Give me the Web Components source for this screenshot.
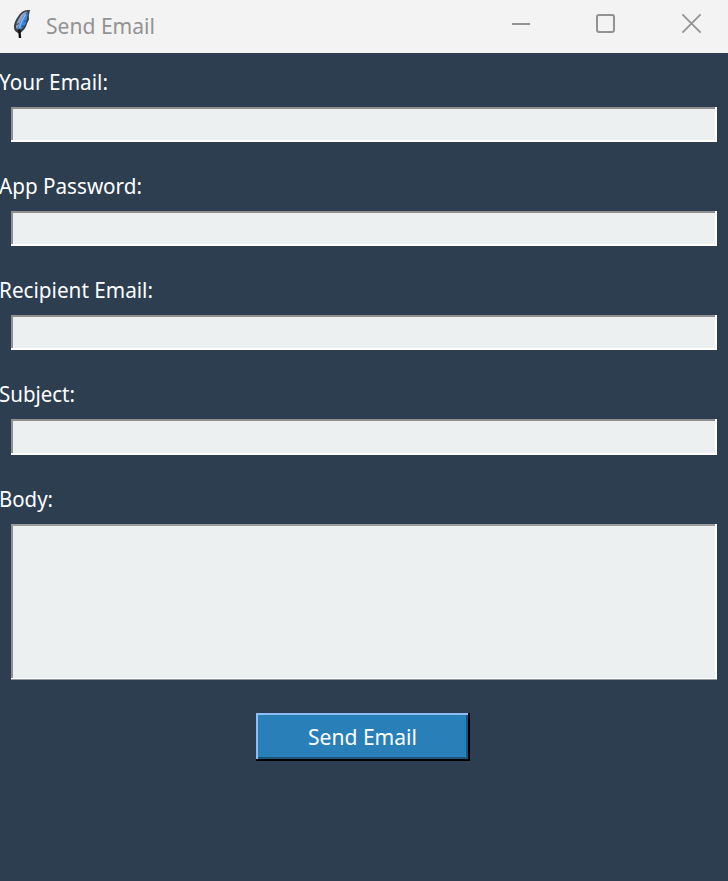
<!DOCTYPE html>
<html lang="en">
<head>
<meta charset="utf-8">
<title>Send Email</title>
<style>
html, body { margin: 0; height: 100%; overflow: hidden; background: #2c3e50; }
body { font-family: "Noto Sans", "Open Sans", sans-serif; }
</style>
</head>
<body>
<app-window>
  <title-bar slot="title">Send Email</title-bar>
  <form-field text-width="109">Your Email:</form-field>
  <form-field text-width="143">App Password:</form-field>
  <form-field text-width="154">Recipient Email:</form-field>
  <form-field text-width="76" box-height="36">Subject:</form-field>
  <form-field text-width="54" multiline box-height="156">Body:</form-field>
  <push-button>Send Email</push-button>
</app-window>
<script>
function define(name, html, setup) {
  const template = document.createElement('template');
  template.innerHTML = html;
  customElements.define(name, class extends HTMLElement {
    connectedCallback() {
      if (this.shadowRoot) return;
      this.attachShadow({ mode: 'open' }).append(template.content.cloneNode(true));
      if (setup) setup(this, this.shadowRoot);
    }
  });
}

/* Condenses a line of text horizontally to a given advance width. */
define('fit-text', `
<style>
:host { display: block; white-space: nowrap; }
span { display: inline-block; transform-origin: 0 50%; }
</style><span><slot></slot></span>`, (host, root) => {
  const span = root.querySelector('span');
  const target = Number(host.getAttribute('width'));
  host.style.width = target + 'px';
  const natural = span.getBoundingClientRect().width;
  if (natural) span.style.transform = 'scaleX(' + target / natural + ')';
});

define('feather-icon', `
<style>:host { display: block; width: 20px; height: 31px; } svg { display: block; }</style>
<svg width="20" height="31" viewBox="0 0 20 31">
  <path d="M18 1 C13.5 .6 10 2 7.6 5.2 C4.6 9 2.4 13 2 17 C1.9 20 2.6 22 4.8 23.2 L6.4 24.2 L9 23.4 C12 21.4 14.4 18 15 14.6 L17 10.5 L16.8 6.5 Z" fill="#3a3d42"/>
  <path d="M15.6 2.6 C12 3 9.4 5 7.4 8.4 C5.2 12 3.8 15.6 4 18.6 L5.2 20.6 L7.6 15.4 L11 8 Z" fill="#86a3c8"/>
  <path d="M16 3 L15.3 7.4 L14.6 11.6 C13.8 15.6 11.4 19 8 21 L5.6 20.2 L7.6 14 L11.4 7.4 Z" fill="#3f86dc"/>
  <path d="M13.6 5.4 C10.8 9.4 8.8 13.6 7.4 18.6" fill="none" stroke="#8dbcf0" stroke-width="1.3"/>
  <path d="M4.2 15.6 L6.8 14.6 M12.2 12.6 L14.6 11.4 M9.4 17.2 L12 17" stroke="#28466e" stroke-width="1"/>
  <path d="M7.3 20.4 L8 29" stroke="#111" stroke-width="2.4"/>
</svg>`);

define('window-controls', `
<style>
:host { display: flex; align-items: center; }
svg { display: block; fill: none; stroke: #929292; stroke-width: 2; }
</style>
<svg width="190" height="22" viewBox="0 0 190 22">
  <path d="M0 11H18"/>
  <rect x="85" y="2" width="17" height="17" rx="2"/>
  <path d="M170.4 1.4L188.6 19.6M188.6 1.4L170.4 19.6" stroke-width="1.7"/>
</svg>`);

define('title-bar', `
<style>
:host { display: flex; box-sizing: border-box; height: 53px; padding: 0 26px 0 12px; background: #f3f3f3; color: #929292; font-size: 22px; line-height: 30px; }
feather-icon { margin-top: 9px; }
fit-text { margin: 10px 0 0 14px; }
window-controls { margin: 13px 0 0 auto; height: 22px; }
svg { flex: none; }
</style>
<feather-icon></feather-icon><fit-text width="109"><slot></slot></fit-text><window-controls></window-controls>`);
 
define('form-field', `
<style>
:host { display: block; }
.label { box-sizing: border-box; height: 54px; padding-top: 13px; margin-left: -1px; font-size: 22px; line-height: 30px; color: #fff; }
.box { --top: #8f8f8f; --end: #fff; box-sizing: border-box; margin: 0 11px 15px; background:
  linear-gradient(#fff, #fff) right / 2px 100% no-repeat,
  linear-gradient(#fff, #fff) bottom / 100% 2px no-repeat,
  linear-gradient(var(--top), var(--top)) top / 100% 2px no-repeat,
  linear-gradient(#8f8f8f, #8f8f8f) left / 2px 100% no-repeat, #ecf0f1; }
:host([multiline]) .box { --top: #999b9c; margin-bottom: 0; border-bottom: 1px solid #8e989f; background-size: 2px 100%, 100% 1px, 100% 2px, 2px 100%; }
</style>
<div class="label"></div><div class="box"></div>`, (host, root) => {
  const label = document.createElement('fit-text');
  label.setAttribute('width', host.getAttribute('text-width'));
  label.append(document.createElement('slot'));
  root.querySelector('.label').append(label);
  root.querySelector('.box').style.height = (host.getAttribute('box-height') || 35) + 'px';
});

define('push-button', `
<style>
:host { display: flex; justify-content: center; box-sizing: border-box; width: 214px; height: 48px; margin: 33px 0 0 256px; padding: 8px 2px 0 0; color: #fff; font-size: 22px; line-height: 30px; background:
  linear-gradient(#000, #000) right / 2px 100% no-repeat,
  linear-gradient(#000, #000) bottom / 100% 2px no-repeat,
  linear-gradient(#8fbcfa, #8fbcfa) top / 100% 2px no-repeat,
  linear-gradient(#8fbcfa, #8fbcfa) left / 2px 100% no-repeat,
  linear-gradient(#1b557b, #1b557b) right 2px top 0 / 2px 100% no-repeat,
  linear-gradient(#1b557b, #1b557b) left 0 bottom 2px / 100% 2px no-repeat, #2980b9; }
</style>
<fit-text width="109"><slot></slot></fit-text>`);

define('app-window', `
<style>
:host { display: block; width: 728px; height: 881px; overflow: hidden; background: #2c3e50; }
</style>
<slot name="title"></slot><slot></slot>`);
</script>
</body>
</html>
